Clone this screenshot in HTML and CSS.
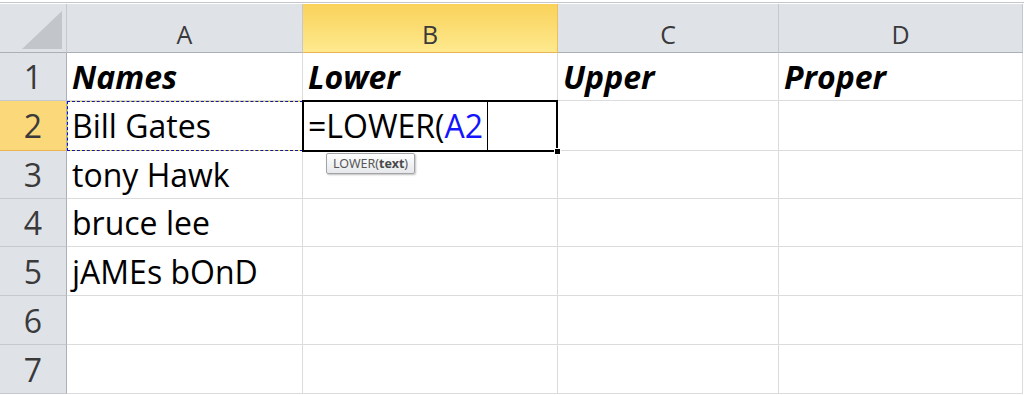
FILE: index.html
```html
<!DOCTYPE html>
<html lang="en">
  <head>
    <meta charset="UTF-8" />
    <title>LOWER function</title>
    <link rel="stylesheet" href="styles.css">
  </head>
  <body>
    <div class="topbar"></div>
    <div class="grid">
      <div class="corner">
        <svg class="selectAll" width="66" height="48" viewBox="0 0 66 48">
          <polygon points="62,7 62,45 22,45" fill="#c2c6cb" />
        </svg>
      </div>
      <div class="colHead">A</div>
      <div class="colHead active">B</div>
      <div class="colHead">C</div>
      <div class="colHead">D</div>

      <div class="rowHead">1</div>
      <div class="cell title">Names</div>
      <div class="cell title">Lower</div>
      <div class="cell title">Upper</div>
      <div class="cell title">Proper</div>

      <div class="rowHead active">2</div>
      <div class="cell copied">Bill Gates<span class="ants"></span></div>
      <div class="cell editing">
        <span>=LOWER(<span class="ref">A2</span></span>
        <span class="caret"></span>
        <span class="handle"></span>
        <div class="tip">LOWER(<b>text</b>)</div>
      </div>
      <div class="cell"></div>
      <div class="cell"></div>

      <div class="rowHead">3</div>
      <div class="cell">tony Hawk</div>
      <div class="cell"></div>
      <div class="cell"></div>
      <div class="cell"></div>

      <div class="rowHead">4</div>
      <div class="cell">bruce lee</div>
      <div class="cell"></div>
      <div class="cell"></div>
      <div class="cell"></div>

      <div class="rowHead">5</div>
      <div class="cell">jAMEs bOnD</div>
      <div class="cell"></div>
      <div class="cell"></div>
      <div class="cell"></div>

      <div class="rowHead">6</div>
      <div class="cell"></div>
      <div class="cell"></div>
      <div class="cell"></div>
      <div class="cell"></div>

      <div class="rowHead">7</div>
      <div class="cell"></div>
      <div class="cell"></div>
      <div class="cell"></div>
      <div class="cell"></div>
    </div>
  </body>
</html>
```

FILE: styles.css
```css
body {
  margin: 0;
  background: #fff;
  font-family: 'Open Sans', 'Noto Sans', sans-serif;
  overflow: hidden;
}

.topbar {
  height: 2px;
  border-bottom: 1px solid #c3c7cd;
  margin-bottom: 1px;
}

.grid {
  display: grid;
  grid-template-columns: 67px 236px 255px 221px 244px;
  grid-template-rows: 49px 48px 50px 48px 48px 49px 49px 49px;
}

.grid > div {
  box-sizing: border-box;
  border-right: 1px solid #dadcdd;
  border-bottom: 1px solid #dadcdd;
}

.corner {
  background: #dfe3e8;
  border-right-color: #c5c9ce !important;
  border-bottom-color: #abb0b6 !important;
}

.selectAll {
  display: block;
}

.colHead {
  display: flex;
  align-items: center;
  justify-content: center;
  padding-top: 11px;
  background: #dfe3e8;
  border-right-color: #c5c9ce !important;
  border-bottom-color: #abb0b6 !important;
  color: #3a3a3a;
  font-size: 25px;
}

.colHead.active {
  background: linear-gradient(#f9d25a, #fee98e);
  border-right-color: #efbf5c !important;
  border-bottom-color: #e8b552 !important;
}

.rowHead {
  display: flex;
  align-items: center;
  justify-content: center;
  background: #dfe3e8;
  border-right-color: #abb0b6 !important;
  border-bottom-color: #c5c9ce !important;
  color: #3a3a3a;
  font-size: 32px;
}

.rowHead.active {
  background: #fbd87a;
  border-bottom-color: #e8b552 !important;
}

.cell {
  position: relative;
  display: flex;
  align-items: center;
  padding-left: 5px;
  color: #000;
  font-size: 32px;
  white-space: nowrap;
}

.title {
  font-weight: 700;
  font-style: italic;
  font-size: 32px;
}

/* marching ants round the copied cell: yellow line under blue dashes */
.ants {
  position: absolute;
  left: 0;
  top: 0;
  right: -1px;
  bottom: -1px;
  border: 1px solid #f0ea1c;
}

.ants::after {
  content: '';
  position: absolute;
  left: -1px;
  top: -1px;
  right: -1px;
  bottom: -1px;
  border: 1px dashed #1010c8;
}

.editing {
  z-index: 2;
}

.editing::after {
  content: '';
  position: absolute;
  left: -1px;
  top: -1px;
  right: -1px;
  bottom: -2px;
  border: 2px solid #000;
}

.ref {
  color: #1414ff;
}

.caret {
  align-self: stretch;
  width: 1px;
  margin-left: 4px;
  background: #000;
}

.handle {
  position: absolute;
  right: -4px;
  bottom: -5px;
  width: 5px;
  height: 5px;
  background: #000;
  border: 1px solid #fff;
  z-index: 3;
}

.tip {
  position: absolute;
  left: 23px;
  top: 52px;
  padding: 2px 6px 2px 6px;
  border: 1px solid #a2a4a8;
  border-radius: 2px;
  background: linear-gradient(#ffffff, #e6e8eb);
  box-shadow: 1px 1px 2px rgba(0, 0, 0, 0.25);
  color: #575757;
  font-family: 'Noto Sans', sans-serif;
  font-size: 12.5px;
  line-height: 15px;
}

.tip b {
  color: #4a4a4a;
}
```
